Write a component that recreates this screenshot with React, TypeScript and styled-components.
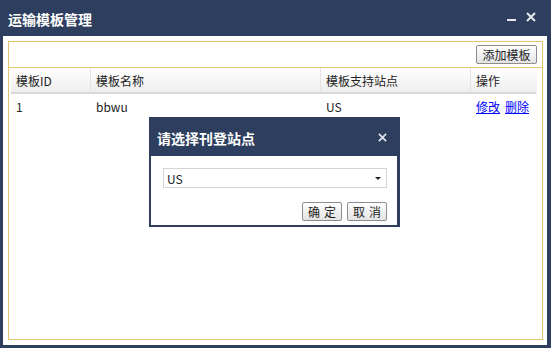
import React from "react";
import styled, { createGlobalStyle } from "styled-components";

const GlobalStyle = createGlobalStyle`
  html, body {
    margin: 0;
    padding: 0;
    background: #2d3e5e;
  }
  body {
    font-family: "Noto Sans CJK SC", "Noto Sans", sans-serif;
    font-size: 12px;
    color: #222;
  }
`;

const Window = styled.div`
  position: relative;
  width: 551px;
  height: 348px;
  display: flex;
  flex-direction: column;
  background: #2d3e5e;
  overflow: hidden;
`;

const TitleBar = styled.div`
  height: 36px;
  display: flex;
  align-items: center;
  padding: 2px 0 0 8px;
  box-sizing: border-box;
`;

const Title = styled.span`
  flex: 1;
  color: #fff;
  font-size: 14px;
  font-weight: bold;
`;

const TitleTools = styled.div`
  display: flex;
  align-items: center;
  gap: 10px;
  margin-right: 15px;
  margin-top: -5px;
`;

const Body = styled.div`
  flex: 1;
  display: flex;
  background: #fff;
  margin: 0 4px 3px 3px;
  padding: 5px 4px 5px 5px;
`;

const Panel = styled.div`
  flex: 1;
  border: 1px solid #e6c36f;
  display: flex;
  flex-direction: column;
`;

const Toolbar = styled.div`
  height: 25px;
  display: flex;
  align-items: center;
  justify-content: flex-end;
  padding: 0 5px 0 0;
  border-bottom: 1px solid #e6c36f;
`;

const Button = styled.button<{ $spaced?: boolean }>`
  height: 19px;
  width: ${(p) => (p.$spaced ? "40px" : "61px")};
  padding: 0;
  display: flex;
  align-items: center;
  justify-content: center;
  white-space: nowrap;
  font-family: inherit;
  font-size: 12px;
  color: #222;
  border: 1px solid #8d8d8d;
  border-radius: 2px;
  background: linear-gradient(#ffffff, #e3e3e3);
  letter-spacing: ${(p) => (p.$spaced ? "4px" : "0")};
  text-indent: ${(p) => (p.$spaced ? "4px" : "0")};
`;

const Grid = styled.div`
  margin: 0 4px 0 2px;
  display: grid;
  grid-template-columns: 80px 230px 150px 66px;
`;

const HeadCell = styled.div<{ $last?: boolean }>`
  height: 24px;
  display: flex;
  align-items: center;
  padding-left: 5px;
  border-bottom: 2px solid #d8d8d8;
  border-right: 1px solid ${(p) => (p.$last ? "transparent" : "#e4e4e4")};
  background: linear-gradient(#ffffff, #eeeeee);
`;

const Cell = styled.div`
  height: 25px;
  display: flex;
  align-items: center;
  padding-left: 5px;
  gap: 5px;
`;

const Link = styled.a`
  color: #0000ff;
  text-decoration: underline;
  cursor: pointer;
`;

const Dialog = styled.div`
  position: absolute;
  left: 149px;
  top: 117px;
  width: 251px;
  height: 110px;
  box-sizing: border-box;
  background: #2d3e5e;
  padding: 0 3px 2px 2px;
  display: flex;
  flex-direction: column;
`;

const DialogHead = styled.div`
  height: 39px;
  display: flex;
  align-items: center;
  padding: 2px 10px 0 6px;
  box-sizing: border-box;
`;

const DialogTitle = styled.span`
  flex: 1;
  color: #fff;
  font-size: 14px;
  font-weight: bold;
`;

const DialogBody = styled.div`
  flex: 1;
  background: #fff;
  padding: 12px 10px 0 12px;
  display: flex;
  flex-direction: column;
  gap: 14px;
`;

const Select = styled.div`
  height: 20px;
  box-sizing: border-box;
  border: 1px solid #d4d4d4;
  display: flex;
  align-items: center;
  padding: 0 0 0 3px;
  font-size: 12px;
`;

const SelectText = styled.span`
  flex: 1;
`;

const Arrow = styled.span`
  width: 0;
  height: 0;
  border-left: 3px solid transparent;
  border-right: 3px solid transparent;
  border-top: 3px solid #222;
  margin-right: 5px;
`;

const Actions = styled.div`
  display: flex;
  justify-content: flex-end;
  gap: 5px;
`;

const Cross: React.FC<{ size: number; color: string }> = ({ size, color }) => (
  <svg width={size} height={size} viewBox="0 0 10 10">
    <path d="M1 1 L9 9 M9 1 L1 9" stroke={color} strokeWidth="2" />
  </svg>
);

const Minus = () => (
  <svg width="9" height="10" viewBox="0 0 9 10">
    <rect x="0" y="7" width="9" height="2" fill="#e6e9ef" />
  </svg>
);

const App: React.FC = () => (
  <>
    <GlobalStyle />
    <Window>
      <TitleBar>
        <Title>运输模板管理</Title>
        <TitleTools>
          <Minus />
          <Cross size={10} color="#e6e9ef" />
        </TitleTools>
      </TitleBar>
      <Body>
        <Panel>
          <Toolbar>
            <Button>添加模板</Button>
          </Toolbar>
          <Grid>
            <HeadCell>模板ID</HeadCell>
            <HeadCell>模板名称</HeadCell>
            <HeadCell>模板支持站点</HeadCell>
            <HeadCell $last>操作</HeadCell>
            <Cell>1</Cell>
            <Cell>bbwu</Cell>
            <Cell>US</Cell>
            <Cell>
              <Link>修改</Link>
              <Link>删除</Link>
            </Cell>
          </Grid>
        </Panel>
      </Body>
      <Dialog>
        <DialogHead>
          <DialogTitle>请选择刊登站点</DialogTitle>
          <Cross size={9} color="#dde2ea" />
        </DialogHead>
        <DialogBody>
          <Select>
            <SelectText>US</SelectText>
            <Arrow />
          </Select>
          <Actions>
            <Button $spaced>确定</Button>
            <Button $spaced>取消</Button>
          </Actions>
        </DialogBody>
      </Dialog>
    </Window>
  </>
);

export default App;
